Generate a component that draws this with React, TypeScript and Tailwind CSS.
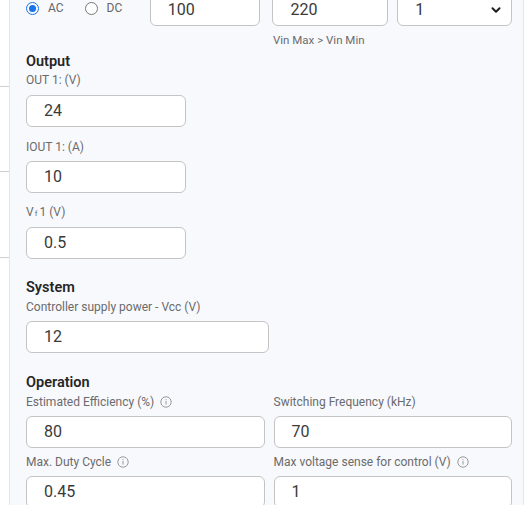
import { ChevronDown } from "lucide-react";

const font = { fontFamily: "Roboto, 'Noto Sans', sans-serif" };

function Info() {
  return (
    <svg width="12" height="12" viewBox="0 0 12 12" className="ml-[6px] inline-block">
      <circle cx="6" cy="6" r="5.2" fill="none" stroke="#9a9a9a" strokeWidth="1" />
      <rect x="5.5" y="5" width="1" height="3.6" fill="#9a9a9a" />
      <rect x="5.5" y="3.2" width="1" height="1" fill="#9a9a9a" />
    </svg>
  );
}

function Field({ value, className = "" }: { value: string; className?: string }) {
  return (
    <div
      className={`h-[32px] rounded-[6px] border border-[#c4c4c4] bg-white pl-[17px] flex items-center text-[16px] text-[#3a3a3a] ${className}`}
    >
      {value}
    </div>
  );
}

function Label({ children, info }: { children: React.ReactNode; info?: boolean }) {
  return (
    <div className="flex items-center h-[16px] text-[12px] text-[#6b6b6b]">
      {children}
      {info && <Info />}
    </div>
  );
}

function Heading({ children }: { children: React.ReactNode }) {
  return <h3 className="h-[20px] leading-[20px] text-[14.5px] font-semibold text-[#262626]">{children}</h3>;
}

export default function App() {
  return (
    <div className="flex h-[505px] w-[527px] overflow-hidden bg-white" style={font}>
      <div className="w-[10px] shrink-0 border-r border-[#e3e6ee] bg-white flex flex-col">
        <div className="h-[87px] border-b border-[#cfcfcf]" />
        <div className="h-[85px] border-b border-[#cfcfcf]" />
        <div className="h-[86px] border-b border-[#cfcfcf]" />
      </div>

      <div className="w-[514px] shrink-0 border-r border-[#e3e6ee] bg-[#f8f9fd] pl-[16px] pr-[11px]">
        <div className="-mt-[6px] flex items-center">
          <div className="flex items-center w-[124px] gap-[10px] -mt-[4px]">
            <span className="flex items-center">
              <span className="w-[13px] h-[13px] rounded-full border-[1.5px] border-[#1a73e8] flex items-center justify-center">
                <span className="w-[7px] h-[7px] rounded-full bg-[#1a73e8]" />
              </span>
              <span className="ml-[9px] text-[12px] text-[#666]">AC</span>
            </span>
            <span className="flex items-center ml-[11px]">
              <span className="w-[13px] h-[13px] rounded-full border border-[#777] bg-white" />
              <span className="ml-[9px] text-[12px] text-[#666]">DC</span>
            </span>
          </div>
          <Field value="100" className="w-[111px]" />
          <Field value="220" className="w-[116px] ml-[12px]" />
          <div className="w-[115px] ml-[9px] h-[32px] rounded-[6px] border border-[#c4c4c4] bg-white pl-[17px] pr-[8px] flex items-center justify-between text-[16px] text-[#3a3a3a]">
            1
            <ChevronDown size={14} strokeWidth={3.5} color="#222" />
          </div>
        </div>
        <div className="ml-[247px] mt-[7px] h-[16px] flex items-center text-[11.5px] text-[#6b6b6b]">Vin Max &gt; Vin Min</div>

        <div className="mt-[3px]">
          <Heading>Output</Heading>
          <Label>OUT 1: (V)</Label>
          <Field value="24" className="w-[160px] mt-[7px]" />
          <div className="mt-[12px]"><Label>IOUT 1: (A)</Label></div>
          <Field value="10" className="w-[160px] mt-[6px]" />
          <div className="mt-[11px]">
            <Label>
              V<sub className="text-[8px] ml-[1px] mr-[2px]">f</sub> 1 (V)
            </Label>
          </div>
          <Field value="0.5" className="w-[160px] mt-[7px]" />
        </div>

        <div className="mt-[19px]">
          <Heading>System</Heading>
          <div className="mt-[1px]"><Label>Controller supply power - Vcc (V)</Label></div>
          <Field value="12" className="w-[243px] mt-[6px]" />
        </div>

        <div className="mt-[20px]">
          <Heading>Operation</Heading>
          <div className="grid grid-cols-2 gap-x-[9px] mt-[1px]">
            <div>
              <Label info>Estimated Efficiency (%)</Label>
              <Field value="80" className="mt-[6px]" />
            </div>
            <div>
              <Label>Switching Frequency (kHz)</Label>
              <Field value="70" className="mt-[6px]" />
            </div>
            <div className="mt-[6px]">
              <Label info>Max. Duty Cycle</Label>
              <Field value="0.45" className="mt-[6px]" />
            </div>
            <div className="mt-[6px]">
              <Label info>Max voltage sense for control (V)</Label>
              <Field value="1" className="mt-[6px]" />
            </div>
          </div>
        </div>
      </div>
    </div>
  );
}
